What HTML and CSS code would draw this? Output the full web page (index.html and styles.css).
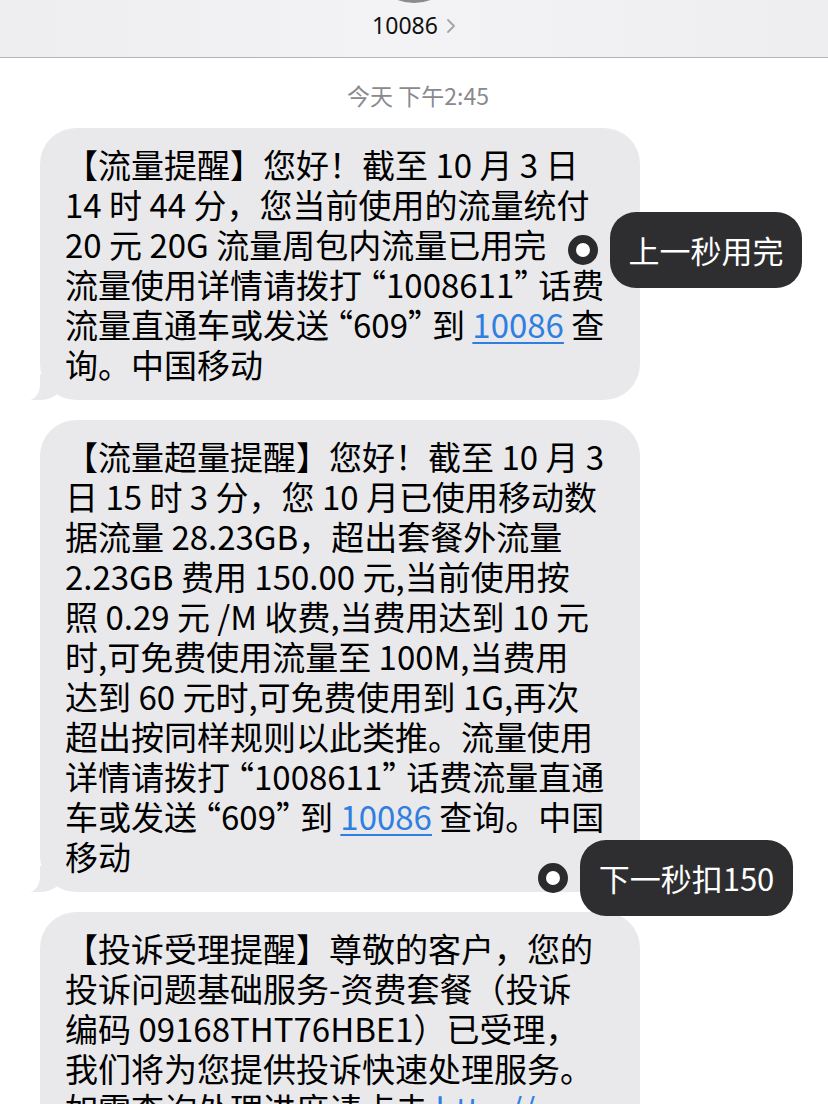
FILE: index.html
```html
<!DOCTYPE html>
<html lang="zh-CN">
<head>
<meta charset="utf-8">
<title>10086</title>
<link rel="stylesheet" href="styles.css">
</head>
<body>
<div class="page">
  <header class="header">
    <div class="avatar"></div>
    <div class="title">10086<svg class="chev" width="10" height="16" viewBox="0 0 10 16"><path d="M2 2 L8 8 L2 14" fill="none" stroke="#a3a3a8" stroke-width="1.8" stroke-linecap="round" stroke-linejoin="round"/></svg></div>
  </header>
  <div class="time">今天 下午2:45</div>
  <div class="thread">
    <div class="bubble">【流量提醒】您好！截至 10 月 3 日<br>14 时 44 分，您当前使用的流量统付<br>20 元 20G 流量周包内流量已用完<br>流量使用详情请拨打<span class="ql">“</span>1008611<span class="qr">”</span>话费<br>流量直通车或发送<span class="ql">“</span>609<span class="qr">”</span>到 <a class="link">10086</a> 查<br>询。中国移动</div>
    <div class="bubble">【流量超量提醒】您好！截至 10 月 3<br>日 15 时 3 分，您 10 月已使用移动数<br>据流量 28.23GB，超出套餐外流量<br>2.23GB 费用 150.00 元,当前使用按<br>照 0.29 元 /M 收费,当费用达到 10 元<br>时,可免费使用流量至 100M,当费用<br>达到 60 元时,可免费使用到 1G,再次<br>超出按同样规则以此类推。流量使用<br>详情请拨打<span class="ql">“</span>1008611<span class="qr">”</span>话费流量直通<br>车或发送<span class="ql">“</span>609<span class="qr">”</span>到 <a class="link">10086</a> 查询。中国<br>移动</div>
    <div class="bubble">【投诉受理提醒】尊敬的客户，您的<br>投诉问题基础服务-资费套餐（投诉<br>编码 09168THT76HBE1）已受理，<br>我们将为您提供投诉快速处理服务。<br>如需查询处理进度请点击 <a class="link">http://</a><br>中国移动</div>
  </div>
  <div class="tag tag-one"><span class="dot"></span><span class="pill">上一秒用完</span></div>
  <div class="tag tag-two"><span class="dot"></span><span class="pill">下一秒扣150</span></div>
</div>
</body>
</html>
```

FILE: styles.css
```css
* { box-sizing: border-box; }
html, body { margin: 0; padding: 0; background: #ffffff; }
body { font-family: "Noto Sans CJK SC", "Noto Sans", sans-serif; }
.page { position: relative; width: 828px; height: 1104px; overflow: hidden; background: #fff; }

.header {
  position: relative;
  height: 58px;
  background: linear-gradient(90deg, #eeeef0, #f3f3f5 50%, #eeeef0);
  border-bottom: 1px solid #b4b4b6;
  display: flex;
  justify-content: center;
  align-items: flex-start;
  overflow: hidden;
}
.avatar {
  position: absolute;
  left: 367px;
  top: -91px;
  width: 94px;
  height: 94px;
  border-radius: 50%;
  background: #8a8a8f;
}
.title {
  margin-top: 9px;
  font-family: "Noto Sans", "Liberation Sans", sans-serif;
  font-size: 23px;
  line-height: 32px;
  color: #111;
  display: flex;
  align-items: center;
  gap: 8px;
}
.chev { margin-top: 2px; }

.time {
  text-align: center;
  font-size: 23px;
  line-height: 30px;
  color: #8a8a8e;
  padding-top: 22px;
  padding-left: 8px;
  height: 70px;
}

.thread {
  display: flex;
  flex-direction: column;
  gap: 20px;
  padding-left: 40px;
}
.bubble {
  position: relative;
  width: 600px;
  background: #e9e9eb;
  border-radius: 36px;
  padding: 16px 10px 16px 25px;
  font-size: 33px;
  line-height: 40px;
  color: #000;
  white-space: nowrap;
}
.bubble::before {
  content: "";
  position: absolute;
  left: -10px;
  bottom: 0;
  width: 32px;
  height: 26px;
  background: #e9e9eb;
  border-bottom-right-radius: 22px 16px;
}
.bubble::after {
  content: "";
  position: absolute;
  left: -30px;
  bottom: 0;
  width: 30px;
  height: 28px;
  background: #fff;
  border-bottom-right-radius: 11px 16px;
}
.ql { margin-left: -9px; }
.qr { margin-right: -9px; }
.link {
  color: #2f7fe2;
  text-decoration: underline;
  text-decoration-thickness: 2px;
  text-underline-offset: 4px;
}

.tag {
  position: absolute;
  display: flex;
  align-items: center;
  gap: 12px;
}
.tag-one { left: 568px; top: 212px; }
.tag-two { left: 538px; top: 840px; }
.dot {
  width: 30px;
  height: 30px;
  border-radius: 50%;
  background: #fff;
  border: 8px solid #2b2b2d;
  flex: none;
}
.pill {
  height: 76px;
  border-radius: 26px;
  background: #2e2e30;
  color: #fff;
  font-size: 31px;
  line-height: 76px;
  white-space: nowrap;
  text-align: center;
}
.tag-one .pill { width: 192px; }
.tag-two .pill { width: 213px; }
```
